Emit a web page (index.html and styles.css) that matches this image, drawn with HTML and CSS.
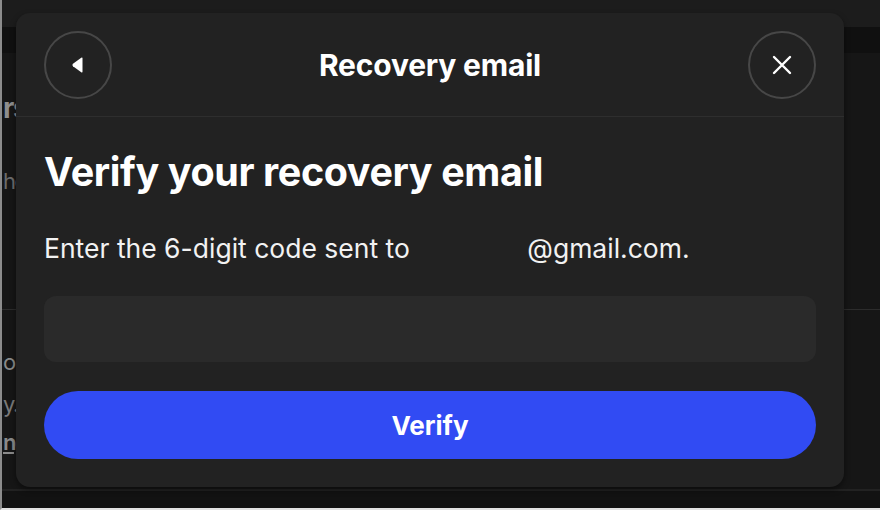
FILE: index.html
```html
<!DOCTYPE html>
<html lang="en">
    <head>
        <meta charset="UTF-8" />
        <title>Recovery email</title>
        <link rel="stylesheet" href="styles.css">
    </head>
    <body>
        <div class="screen">
            <!-- page behind the dialog -->
            <div class="backdrop">
                <div class="topbar"></div>
                <div class="band"></div>
                <div class="bg-column">
                    <div class="bg-title">rs</div>
                    <div class="bg-text bg-he">he</div>
                    <div class="bg-rule"></div>
                    <div class="bg-text bg-o">o</div>
                    <div class="bg-text bg-yc">y.c</div>
                    <div class="bg-link">ng</div>
                </div>
                <div class="bottom-rule"></div>
            </div>

            <!-- dialog -->
            <div class="modal">
                <div class="modal-head">
                    <button class="circle-btn" aria-label="Back">
                        <svg width="16" height="18" viewBox="0 0 16 18">
                            <path d="M12.5 2.4 L12.5 15.6 Q12.5 17.2 11.2 16.3 L3 10.2 Q1.6 9 3 7.8 L11.2 1.7 Q12.5 0.8 12.5 2.4 Z" fill="#fff"/>
                        </svg>
                    </button>
                    <h2 class="modal-title">Recovery email</h2>
                    <button class="circle-btn" aria-label="Close">
                        <svg width="22" height="22" viewBox="0 0 22 22">
                            <path d="M3 3 L19 19 M19 3 L3 19" stroke="#fff" stroke-width="2.4" stroke-linecap="round"/>
                        </svg>
                    </button>
                </div>
                <div class="modal-body">
                    <h1 class="heading">Verify your recovery email</h1>
                    <p class="lead">Enter the 6-digit code sent to <span class="redacted"></span>@gmail.com.</p>
                    <input class="code-input" type="text" inputmode="numeric" maxlength="6" />
                    <button class="verify-btn">Verify</button>
                </div>
            </div>
        </div>
    </body>
</html>
```

FILE: styles.css
```css
body {
    margin: 0;
    background-color: #161616;
    font-family: Inter, "Noto Sans", sans-serif;
    color: #fff;
}
.screen {
    position: relative;
    width: 880px;
    height: 510px;
    overflow: hidden;
    background-color: #161616;
}
/* screenshot frame edges */
.screen::after {
    content: '';
    position: absolute;
    inset: 0;
    border-left: 2px solid #8c8c8c;
    border-bottom: 2px solid #e2e2e2;
    pointer-events: none;
}
.backdrop {
    height: 100%;
}
.topbar {
    height: 27px;
    background-color: #1c1c1c;
}
.band {
    height: 26px;
    background-color: #101010;
}
.bg-column {
    padding-left: 3px;
    letter-spacing: -1.5px;
}
.bg-title {
    margin-top: 38px;
    font-size: 28px;
    line-height: 34px;
    font-weight: 700;
    color: #8e8e8e;
}
.bg-text {
    font-size: 22px;
    line-height: 28px;
    color: #7a7a7a;
}
.bg-he {
    margin-top: 42px;
    color: #6c6c6c;
}
.bg-rule {
    height: 1px;
    margin-top: 114px;
    margin-left: -3px;
    width: 880px;
    background-color: #2c2c2c;
}
.bg-o {
    margin-top: 38px;
    color: #8a8a8a;
}
.bg-yc {
    margin-top: 14px;
}
.bg-link {
    margin-top: 10px;
    font-size: 22px;
    line-height: 28px;
    font-weight: 600;
    color: #8a8a8a;
    text-decoration: underline;
}
.bottom-rule {
    position: absolute;
    left: 0;
    right: 0;
    top: 489px;
    height: 2px;
    background-color: #222;
    border-bottom: 18px solid #121212;
}

.modal {
    position: absolute;
    left: 16px;
    top: 13px;
    width: 828px;
    height: 474px;
    background-color: #222;
    border-radius: 14px;
    box-shadow: 0 3px 6px rgba(0, 0, 0, 0.45);
}
.modal-head {
    display: flex;
    align-items: center;
    justify-content: space-between;
    padding: 18px 28px 17px;
    border-bottom: 1px solid #2e2e2e;
}
.circle-btn {
    width: 68px;
    height: 68px;
    border: 2px solid #474747;
    border-radius: 50%;
    background: none;
    display: flex;
    align-items: center;
    justify-content: center;
    padding: 0;
    cursor: pointer;
}
.modal-title {
    margin: 0;
    font-size: 30px;
    font-weight: 700;
    letter-spacing: -0.2px;
}
.modal-body {
    padding: 0 28px;
}
.heading {
    margin: 32px 0 0;
    font-size: 39.5px;
    font-weight: 700;
    line-height: 46px;
    letter-spacing: -0.4px;
}
.lead {
    margin: 37px 0 0;
    font-size: 26.5px;
    line-height: 32px;
    color: #f2f2f2;
}
.redacted {
    display: inline-block;
    width: 110px;
}
.code-input {
    display: block;
    box-sizing: border-box;
    width: 100%;
    height: 66px;
    margin-top: 32px;
    border: none;
    border-radius: 12px;
    background-color: #2a2a2a;
    color: #fff;
    font-family: inherit;
    font-size: 24px;
    padding: 0 20px;
    outline: none;
}
.verify-btn {
    display: block;
    width: 100%;
    height: 68px;
    margin-top: 29px;
    border: none;
    border-radius: 34px;
    background-color: #314bf3;
    color: #fff;
    font-family: inherit;
    font-size: 26px;
    font-weight: 700;
    cursor: pointer;
}
```
